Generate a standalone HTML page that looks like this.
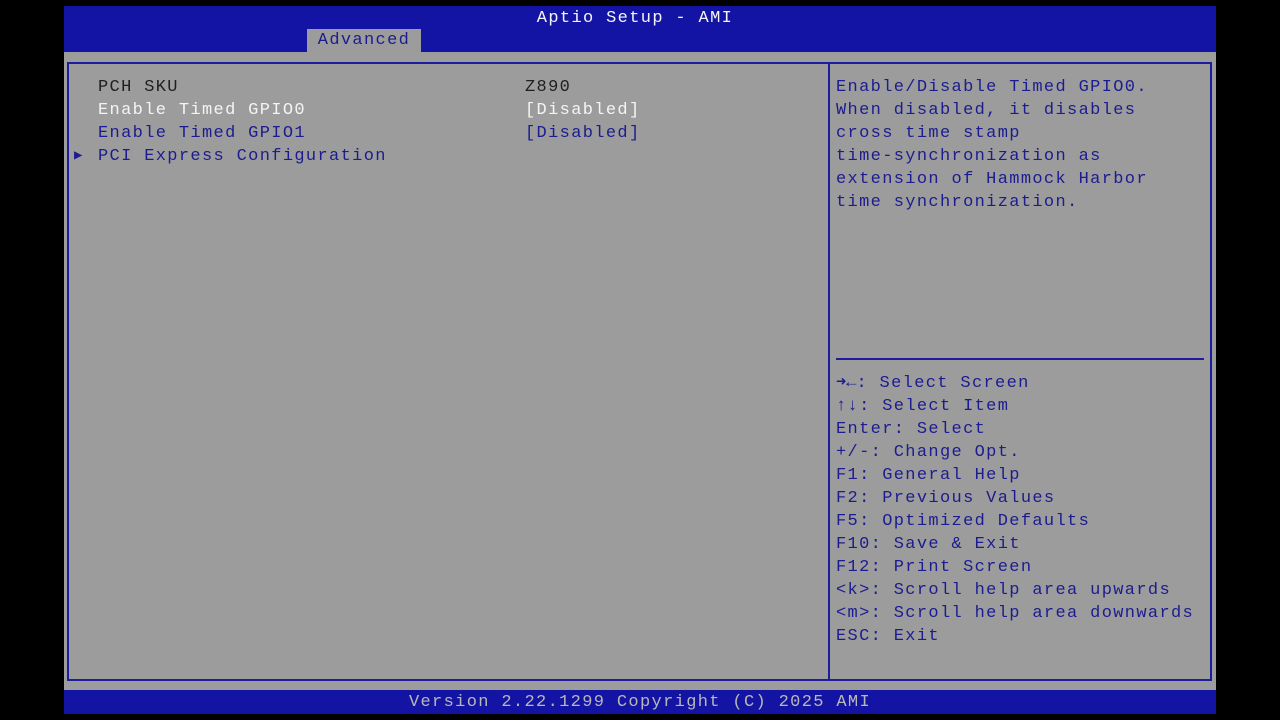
<!DOCTYPE html><html><head><style>
body{margin:0;width:1280px;height:720px;background:#000;position:relative;overflow:hidden;font-family:"Liberation Mono",monospace;font-size:17px;letter-spacing:1.35px}
div{position:absolute;white-space:pre}
.b{color:#1c1c90}.w{color:#f4f4f4}.k{color:#202020}
.l{line-height:23px}
</style></head><body>
<div style="left:64px;top:6px;width:1152px;height:46px;background:#1414a4"></div>
<div class="w" style="left:0;width:1270px;text-align:center;top:7px;line-height:23px">Aptio Setup - AMI</div>
<div style="left:307px;top:29px;width:114px;height:23px;background:#9c9c9c;color:#1c1c90;text-align:center;line-height:24px">Advanced</div>
<div style="left:64px;top:52px;width:1152px;height:638px;background:#9c9c9c"></div>
<div style="left:67px;top:62px;width:1141px;height:615px;border:2px solid #1c1c9c"></div>
<div style="left:828px;top:63px;width:2px;height:616px;background:#1c1c9c"></div>
<div style="left:836px;top:358px;width:368px;height:2px;background:#1c1c9c"></div>
<div class="l" style="left:98px;top:76px"><span class="k">PCH SKU</span>
<span class="w">Enable Timed GPIO0</span>
<span class="b">Enable Timed GPIO1</span>
<span class="b">PCI Express Configuration</span></div>
<div class="b" style="left:74px;top:145px;font-size:14px;line-height:23px">▶</div>
<div class="l" style="left:525px;top:76px"><span class="k">Z890</span>
<span class="w">[Disabled]</span>
<span class="b">[Disabled]</span></div>
<div class="l b" style="left:836px;top:76px">Enable/Disable Timed GPIO0.
When disabled, it disables
cross time stamp
time-synchronization as
extension of Hammock Harbor
time synchronization.</div>
<div class="l b" style="left:836px;top:372px"><b style="letter-spacing:0">➜←</b>: Select Screen
<b>↑↓</b>: Select Item
Enter: Select
+/-: Change Opt.
F1: General Help
F2: Previous Values
F5: Optimized Defaults
F10: Save &amp; Exit
F12: Print Screen
&lt;k&gt;: Scroll help area upwards
&lt;m&gt;: Scroll help area downwards
ESC: Exit</div>
<div style="left:64px;top:690px;width:1152px;height:24px;background:#1414a4"></div>
<div style="left:0;width:1280px;text-align:center;top:691px;line-height:23px;color:#b8b8b8">Version 2.22.1299 Copyright (C) 2025 AMI</div>
</body></html>
